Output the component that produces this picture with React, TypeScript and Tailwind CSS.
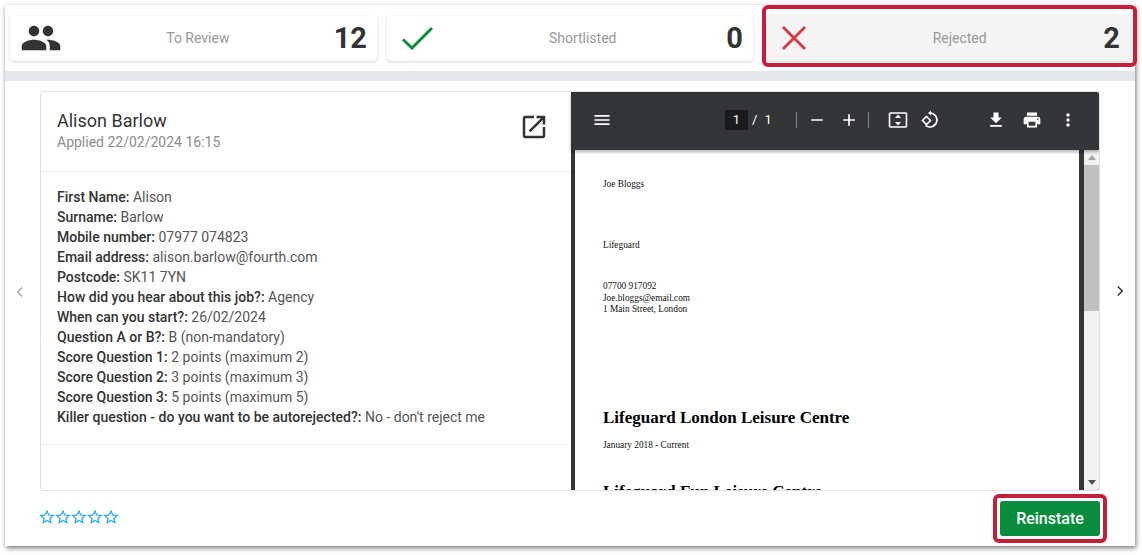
import React from "react";

const Stat = ({ icon, label, value, active, cardClass, labelClass }: { icon: React.ReactNode; label: string; value: string; active?: boolean; cardClass: string; labelClass?: string }) => (
  <div className={`shrink-0 h-[46px] rounded-[4px] flex items-center shadow-[0_1px_3px_rgba(0,0,0,0.18)] px-[10px] ${active ? "bg-[#f4f4f4]" : "bg-white"} ${cardClass}`}>
    {icon}
    <div className={`flex-1 text-center text-[14px] text-[#999999] ${labelClass ?? ""}`}>{label}</div>
    <div className="text-[29px] font-bold text-[#333333] leading-none">{value}</div>
  </div>
);

const Tool = ({ d, className = "" }: { d: string; className?: string }) => (
  <svg viewBox="0 0 24 24" width="20" height="20" fill="white" className={className}><path d={d} /></svg>
);

const Star = () => (
  <svg viewBox="0 0 24 24" width="16" height="16" fill="none" stroke="#29abe2" strokeWidth="2"><path d="M12 3l2.7 6 6.5.7-4.8 4.4 1.3 6.4L12 17.3 6.3 20.5l1.3-6.4L2.8 9.7 9.3 9z" /></svg>
);

const rows: [string, string][] = [
  ["First Name:", "Alison"],
  ["Surname:", "Barlow"],
  ["Mobile number:", "07977 074823"],
  ["Email address:", "alison.barlow@fourth.com"],
  ["Postcode:", "SK11 7YN"],
  ["How did you hear about this job?:", "Agency"],
  ["When can you start?:", "26/02/2024"],
  ["Question A or B?:", "B (non-mandatory)"],
  ["Score Question 1:", "2 points (maximum 2)"],
  ["Score Question 2:", "3 points (maximum 3)"],
  ["Score Question 3:", "5 points (maximum 5)"],
  ["Killer question - do you want to be autorejected?:", "No - don't reject me"],
];

export default function App() {
  return (
    <div className="w-[1142px] h-[555px] bg-white overflow-hidden font-['Roboto',sans-serif] pl-[5px] pt-[5px] pr-[7px] pb-[9px]">
      <div className="relative w-full h-full bg-white shadow-[1px_2px_5px_rgba(0,0,0,0.55)] flex flex-col">
        <div className="h-[66px] flex px-[5px] pt-[10px] shrink-0">
          <Stat cardClass="w-[367px]" label="To Review" value="12" icon={
            <svg viewBox="0 0 24 24" width="42" height="42" fill="#333333"><path d="M16 11c1.66 0 2.99-1.34 2.99-3S17.66 5 16 5s-3 1.34-3 3 1.34 3 3 3zm-8 0c1.66 0 2.99-1.34 2.99-3S9.66 5 8 5 5 6.34 5 8s1.34 3 3 3zm0 2c-2.33 0-7 1.17-7 3.5V19h14v-2.5C15 14.17 10.33 13 8 13zm8 0c-.29 0-.62.02-.97.05 1.16.84 1.97 1.97 1.97 3.45V19h6v-2.5c0-2.33-4.67-3.5-7-3.5z" /></svg>
          } />
          <Stat cardClass="w-[366px] ml-[10px]" labelClass="pl-[6px]" label="Shortlisted" value="0" icon={
            <svg viewBox="0 0 31 24" width="31" height="24" className="ml-[5px]" fill="none" stroke="#0b8e3e" strokeWidth="3"><path d="M1 13.5l9 8.5L30 2" /></svg>
          } />
          <Stat active cardClass="w-[363px] ml-[14px]" labelClass="pl-[10px]" label="Rejected" value="2" icon={
            <svg viewBox="0 0 24 24" width="24" height="24" className="ml-[5px]" fill="none" stroke="#d9363e" strokeWidth="2.8"><path d="M1 1l22 22M23 1L1 23" /></svg>
          } />
        </div>
        <div className="h-[10px] bg-[#e3e7ea] shrink-0" />
        <div className="flex-1 flex flex-col px-[35px] pt-[10px] min-h-0">
          <div className="h-[400px] shrink-0 flex border border-[#e2e2e2] rounded-[3px] overflow-hidden">
            <div className="w-[530px] shrink-0 flex flex-col">
              <div className="h-[80px] border-b border-[#eeeeee] px-4 pt-[17px] flex justify-between shrink-0">
                <div>
                  <div className="text-[18px] leading-[23px] text-[#333333]">Alison Barlow</div>
                  <div className="text-[14px] leading-[20px] text-[#8c8c8c]">Applied 22/02/2024 16:15</div>
                </div>
                <svg viewBox="0 0 24 24" width="30" height="30" fill="#333333" className="mr-[6px] mt-[3px]"><path d="M19 19H5V5h7V3H5a2 2 0 0 0-2 2v14a2 2 0 0 0 2 2h14c1.1 0 2-.9 2-2v-7h-2v7zM14 3v2h3.59l-9.83 9.83 1.41 1.41L19 6.41V10h2V3h-7z" /></svg>
              </div>
              <div className="h-[273px] border-b border-[#f2f2f2] px-4 pt-[15px] text-[14px] leading-[20px] text-[#555555] shrink-0">
                {rows.map(([k, v]) => (
                  <div key={k}><span className="font-medium text-[#333333]">{k}</span> {v}</div>
                ))}
              </div>
            </div>
            <div className="flex-1 flex flex-col min-w-0 bg-[#323639]">
              <div className="h-[58px] shrink-0 flex items-center pb-[2px] text-white text-[13px] shadow-[0_2px_3px_rgba(0,0,0,0.3)] z-10">
                <Tool className="ml-[21px]" d="M3 18h18v-2H3v2zm0-5h18v-2H3v2zm0-7v2h18V6H3z" />
                <div className="ml-[113px] w-[23px] h-[20px] bg-[#191b1c] flex items-center justify-center">1</div>
                <span className="ml-[4px]">/</span>
                <span className="ml-[7px]">1</span>
                <div className="ml-[24px] w-px h-[16px] bg-[#80868b]" />
                <Tool className="ml-[10px]" d="M5 11h14v2H5z" />
                <Tool className="ml-[12px]" d="M19 13h-6v6h-2v-6H5v-2h6V5h2v6h6v2z" />
                <div className="ml-[9px] w-px h-[16px] bg-[#80868b]" />
                <svg viewBox="0 0 20 20" width="20" height="20" className="ml-[19px]" fill="none" stroke="white" strokeWidth="1.6"><rect x="1.5" y="3" width="17" height="14" rx="1" /><path d="M10 4.5L7 8h6zM10 15.5L7 12h6z" fill="white" stroke="none" /></svg>
                <svg viewBox="0 0 20 20" width="20" height="20" className="ml-[12px]" fill="none" stroke="white" strokeWidth="1.6"><path d="M10 3a7 7 0 1 1-4.5 12.4" /><path d="M11 0.5L8 3l3 2.5z" fill="white" stroke="none" /><path d="M6.5 6.5l4 4-4 4-4-4z" /></svg>
                <Tool className="ml-[46px]" d="M19 9h-4V3H9v6H5l7 7 7-7zM5 18v2h14v-2H5z" />
                <Tool className="ml-[16px]" d="M19 8H5c-1.66 0-3 1.34-3 3v6h4v4h12v-4h4v-6c0-1.66-1.34-3-3-3zm-3 11H8v-5h8v5zm3-7c-.55 0-1-.45-1-1s.45-1 1-1 1 .45 1 1-.45 1-1 1zm-1-9H6v4h12V3z" />
                <Tool className="ml-[16px]" d="M12 8c1.1 0 2-.9 2-2s-.9-2-2-2-2 .9-2 2 .9 2 2 2zm0 2c-1.1 0-2 .9-2 2s.9 2 2 2 2-.9 2-2-.9-2-2-2zm0 6c-1.1 0-2 .9-2 2s.9 2 2 2 2-.9 2-2-.9-2-2-2z" />
              </div>
              <div className="flex-1 flex min-h-0">
                <div className="flex-1 ml-[4px] mr-[5px] bg-white pl-[28px] pt-[29px] font-['Liberation_Serif',serif] text-[9.3px] text-[#111111] overflow-hidden min-w-0">
                  <div className="leading-[11px]">Joe Bloggs</div>
                  <div className="leading-[11px] mt-[50px]">Lifeguard</div>
                  <div className="leading-[11.5px] mt-[30px]">07700 917092<br />Joe.bloggs@email.com<br />1 Main Street, London</div>
                  <div className="text-[17px] font-bold leading-[20px] mt-[92px] text-black">Lifeguard London Leisure Centre</div>
                  <div className="leading-[11px] mt-[12px]">January 2018 - Current</div>
                  <div className="text-[17px] font-bold leading-[20px] mt-[31px] text-black whitespace-nowrap">Lifeguard Fun Leisure Centre</div>
                </div>
                <div className="w-[15px] shrink-0 bg-[#f1f1f1] flex flex-col items-center relative">
                  <svg viewBox="0 0 10 6" width="8" height="5" className="mt-[5px]" fill="#a3a3a3"><path d="M5 0l5 6H0z" /></svg>
                  <div className="w-full h-[146px] bg-[#c1c1c1] mt-[5px]" />
                  <svg viewBox="0 0 10 6" width="8" height="5" className="absolute bottom-[5px]" fill="#505050"><path d="M0 0h10L5 6z" /></svg>
                </div>
              </div>
            </div>
          </div>
          <div className="flex-1 flex items-center justify-between">
            <div className="flex -mt-[4px] -ml-[1px]"><Star /><Star /><Star /><Star /><Star /></div>
            <div className="-mr-[7px] w-[114px] h-[49px] border-[4px] border-[#c4203a] rounded-[6px] p-[3px]">
              <div className="w-full h-full bg-[#078d3d] rounded-[3px] text-white font-medium text-[16px] flex items-center justify-center">Reinstate</div>
            </div>
          </div>
        </div>
        <svg viewBox="0 0 10 16" width="8" height="12" className="absolute left-[11px] top-[281px]" fill="none" stroke="#a8a8a8" strokeWidth="2"><path d="M8 2L2 8l6 6" /></svg>
        <svg viewBox="0 0 10 16" width="8" height="12" className="absolute left-[1111px] top-[280px]" fill="none" stroke="#333333" strokeWidth="2"><path d="M2 2l6 6-6 6" /></svg>
        <div className="absolute left-[757px] top-0 w-[375px] h-[62px] border-[4px] border-[#c4203a] rounded-[6px]" />
      </div>
    </div>
  );
}
